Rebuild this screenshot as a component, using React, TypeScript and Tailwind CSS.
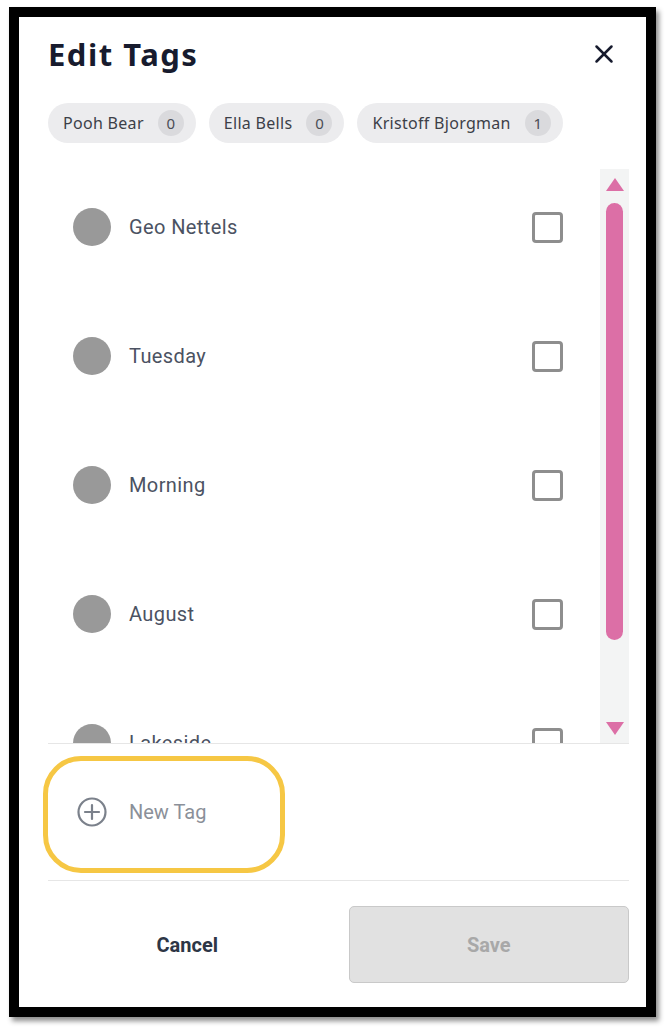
import { X } from "lucide-react";

const chips = [
  { name: "Pooh Bear", count: 0 },
  { name: "Ella Bells", count: 0 },
  { name: "Kristoff Bjorgman", count: 1 },
];

const tags = ["Geo Nettels", "Tuesday", "Morning", "August", "Lakeside"];

function TagRow({ label }: { label: string }) {
  return (
    <div className="h-[129px] shrink-0 pt-[39px] pl-[25px] pr-[37px]">
      <div className="flex h-[38px] items-center">
        <span className="h-[38px] w-[38px] shrink-0 rounded-full bg-[#999999]" />
        <span className="ml-[18px] flex-1 font-['Roboto'] text-[20px] tracking-[0.4px] text-[#4b5262]">
          {label}
        </span>
        <span className="h-[31px] w-[31px] rounded-[4px] border-[3px] border-[#8e8e8e] bg-white" />
      </div>
    </div>
  );
}

export default function App() {
  return (
    <div className="min-h-[1028px] bg-white pl-[9px] pt-[7px]">
      <div className="w-[647px] border-[10px] border-black bg-white shadow-[3px_4px_5px_rgba(0,0,0,0.45)]">
        <div className="flex h-[990px] flex-col pl-[29px] pr-[17px] pt-[17px]">
          {/* header */}
          <div className="flex h-[40px] items-center justify-between">
            <h1 className="font-['Noto_Sans'] text-[31px] font-bold leading-none tracking-[1.5px] text-[#171b2e]">
              Edit Tags
            </h1>
            <button className="mr-[10px] text-[#171b2e]">
              <X size={30} strokeWidth={2} />
            </button>
          </div>

          {/* selected people */}
          <div className="mt-[29px] flex gap-[13px]">
            {chips.map((c) => (
              <div
                key={c.name}
                className="flex h-[40px] items-center gap-[14px] rounded-full bg-[#ececee] pl-[15px] pr-[12px]"
              >
                <span className="font-['Noto_Sans'] text-[16px] tracking-[0.3px] text-[#3c3f48]">{c.name}</span>
                <span className="flex h-[26px] w-[26px] items-center justify-center rounded-full bg-[#dadadd] font-['Noto_Sans'] text-[15px] text-[#4a4d55]">
                  {c.count}
                </span>
              </div>
            ))}
          </div>

          {/* tag list */}
          <div className="mt-[26px] flex h-[575px] border-b border-[#e6e6e6]">
            <div className="flex flex-1 flex-col overflow-hidden">
              {tags.map((t) => (
                <TagRow key={t} label={t} />
              ))}
            </div>
            <div className="flex w-[29px] flex-col items-center bg-[#f3f4f4] pt-[9px]">
              <span className="h-0 w-0 border-x-[9px] border-b-[13px] border-x-transparent border-b-[#dc6fa6]" />
              <span className="mt-[12px] h-[437px] w-[17px] rounded-full bg-[#dc6fa6]" />
              <span className="mt-[82px] h-0 w-0 border-x-[9px] border-t-[13px] border-x-transparent border-t-[#dc6fa6]" />
            </div>
          </div>

          {/* new tag */}
          <div className="relative flex h-[137px] items-center border-b border-[#e6e6e6] pl-[29px]">
            <svg width="30" height="30" viewBox="0 0 30 30" fill="none" stroke="#7b818b" strokeWidth="2.2" strokeLinecap="round">
              <circle cx="15" cy="15" r="13.5" />
              <path d="M15 8v14M8 15h14" />
            </svg>
            <span className="ml-[22px] font-['Roboto'] text-[20px] text-[#8b9099]">New Tag</span>
            <div className="absolute left-[-5px] top-[12px] h-[117px] w-[242px] rounded-[38px] border-[5px] border-[#f6c744]" />
          </div>

          {/* footer */}
          <div className="flex gap-[22px] pt-[25px]">
            <button className="flex h-[77px] flex-1 items-center justify-center font-['Roboto'] text-[20px] font-bold text-[#2d3646]">
              Cancel
            </button>
            <button className="flex h-[77px] flex-1 items-center justify-center rounded-[5px] border border-[#c9c9c9] bg-[#e1e1e1] font-['Roboto'] text-[20px] font-bold text-[#a8a8a8]">
              Save
            </button>
          </div>
        </div>
      </div>
    </div>
  );
}
